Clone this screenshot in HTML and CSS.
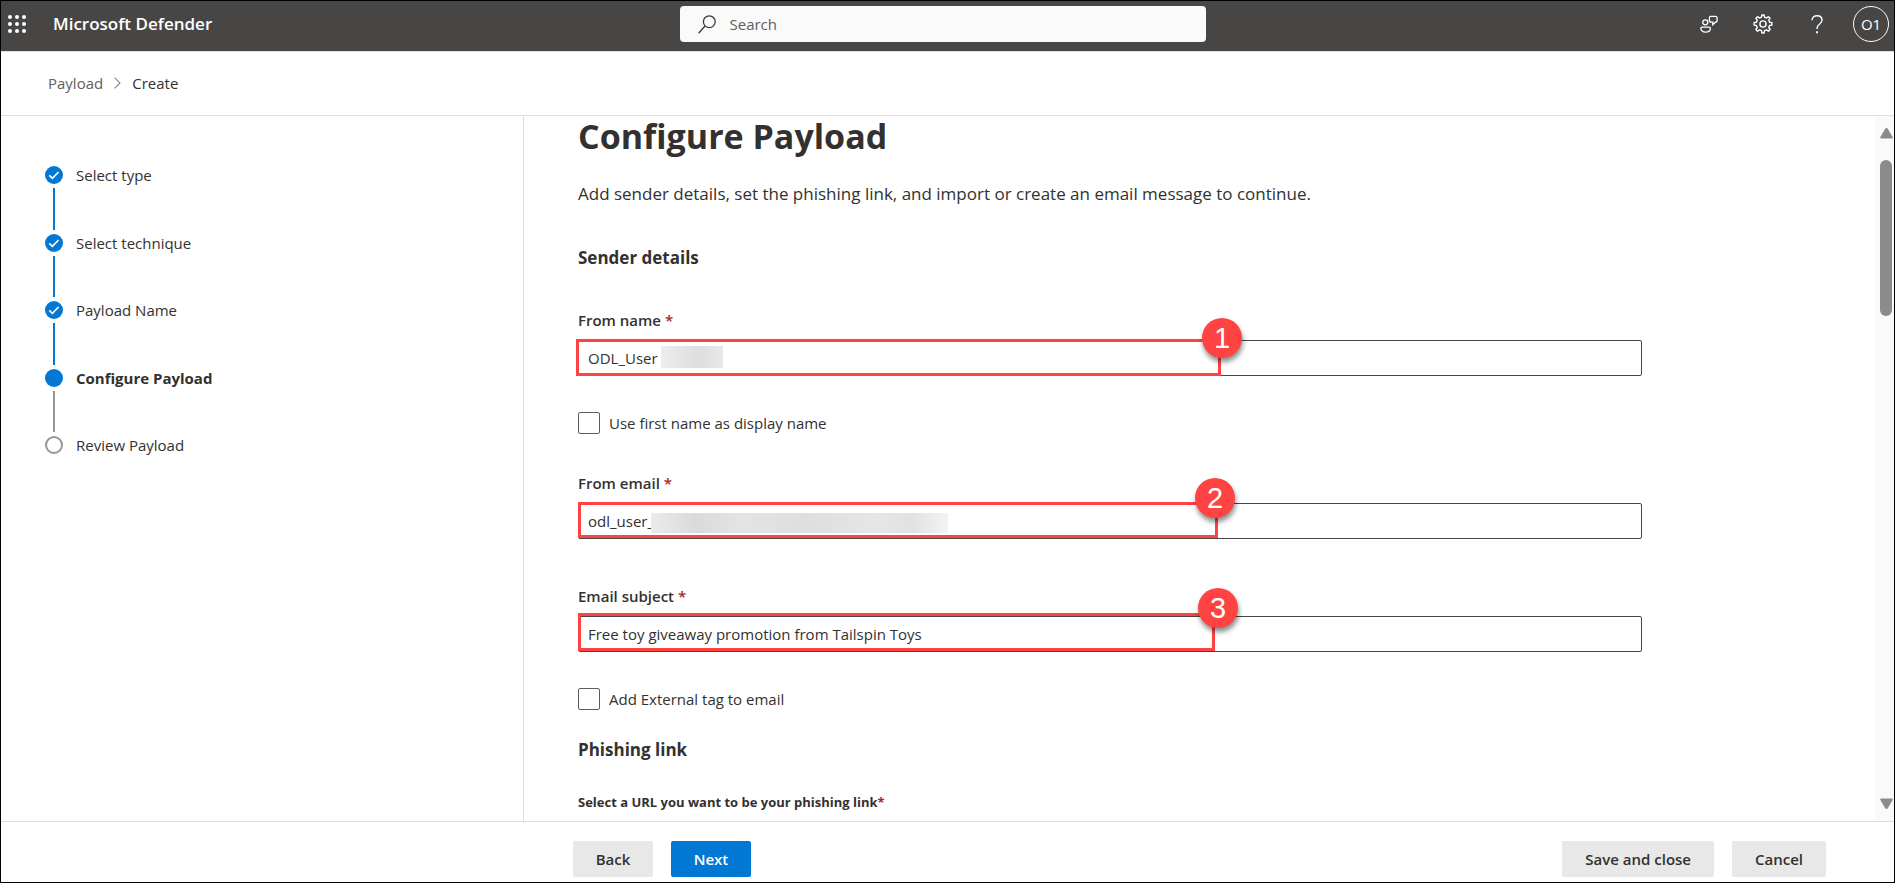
FILE: index.html
```html
<!DOCTYPE html>
<html lang="en">
<head>
<meta charset="utf-8">
<title>Microsoft Defender</title>
<link rel="stylesheet" href="styles.css">
</head>
<body>
<div class="app">
  <header class="topbar">
    <div class="brand">
      <button class="icon-button" type="button" aria-label="App launcher">
        <svg width="18" height="18" viewBox="0 0 18 18" fill="#fff"><circle cx="2" cy="2" r="2"/><circle cx="9" cy="2" r="2"/><circle cx="16" cy="2" r="2"/><circle cx="2" cy="9" r="2"/><circle cx="9" cy="9" r="2"/><circle cx="16" cy="9" r="2"/><circle cx="2" cy="16" r="2"/><circle cx="9" cy="16" r="2"/><circle cx="16" cy="16" r="2"/></svg>
      </button>
      <span class="brand-name">Microsoft Defender</span>
    </div>
    <label class="search">
      <svg width="18" height="19" viewBox="0 0 18 19" fill="none" stroke="#3b3a39" stroke-width="1.3"><circle cx="11.3" cy="6.7" r="5.9"/><path d="M7 11 .6 18.2"/></svg>
      <input class="search-input" type="text" placeholder="Search" aria-label="Search">
    </label>
    <div class="actions">
      <button class="icon-button" type="button" aria-label="Feedback">
        <svg width="18" height="18" viewBox="0 0 18 18" fill="none" stroke="#fff" stroke-width="1.3"><circle cx="5.3" cy="7.3" r="2.5"/><path d="M2.2 12.1h6.9c.8 0 1.3.5 1.3 1.2 0 2.300-2.100 3.900-4.900 3.900S.8 15.600.8 13.300c0-.7.6-1.200 1.400-1.200Z"/><path d="M10.500 1.400h4.900c1 0 1.700.7 1.700 1.600v2.600c0 .9-.7 1.600-1.700 1.600l-2.600 2.600V7.200h-1.200c-1.200 0-2.200-.9-2.200-2V2.800c0-.8.5-1.400 1.100-1.400Z"/></svg>
      </button>
      <button class="icon-button" type="button" aria-label="Settings">
        <svg width="20" height="20" viewBox="0 0 20 20" fill="none" stroke="#fff" stroke-width="1.4" stroke-linejoin="round"><circle cx="10" cy="10" r="3.100"/><path d="M8.500 3.200 8.900 1h2.200l.4 2.200 2 .8 1.900-1.300 1.600 1.600L15.800 6.200l.8 2 2.300.4v2.500l-2.300.4-.8 2 1.300 2-1.700 1.700-1.900-1.300-2 .8-.4 2.300H8.900l-.4-2.300-2-.8-1.900 1.300-1.700-1.700 1.300-2-.8-2-2.300-.4V8.600l2.300-.4.8-2L2.900 4.300l1.700-1.600L6.500 4Z"/></svg>
      </button>
      <button class="icon-button" type="button" aria-label="Help">
        <svg width="12" height="19" viewBox="0 0 12 19" fill="none" stroke="#fff" stroke-width="1.400"><path d="M1 5.300C1 2.500 3.100.8 6 .8s5 1.600 5 4.300c0 2.200-1.300 3.100-2.600 4.200C6.900 10.500 6 11.300 6 13.500v.5"/><path d="M5.100 17.300h1.900" stroke-width="2"/></svg>
      </button>
      <button class="avatar" type="button">O1</button>
    </div>
  </header>

  <nav class="breadcrumb" aria-label="Breadcrumb">
    <a class="crumb" href="#payload">Payload</a>
    <svg width="7" height="12" viewBox="0 0 7 12" fill="none" stroke="#8a8886" stroke-width="1.100"><path d="m.6.600 5.400 5.400L.6 11.400"/></svg>
    <a class="crumb crumb-current" href="#create">Create</a>
  </nav>

  <div class="body">
    <aside class="sidebar">
      <ol class="steps">
        <li class="step done"><span class="marker"><svg width="18" height="18" viewBox="0 0 18 18" fill="none" stroke="#fff" stroke-width="1.700"><path d="m4.300 9.300 3.100 3 6.200-6.300"/></svg></span>Select type</li>
        <li class="rail"></li>
        <li class="step done"><span class="marker"><svg width="18" height="18" viewBox="0 0 18 18" fill="none" stroke="#fff" stroke-width="1.700"><path d="m4.300 9.300 3.100 3 6.200-6.300"/></svg></span>Select technique</li>
        <li class="rail"></li>
        <li class="step done"><span class="marker"><svg width="18" height="18" viewBox="0 0 18 18" fill="none" stroke="#fff" stroke-width="1.700"><path d="m4.300 9.300 3.100 3 6.200-6.300"/></svg></span>Payload Name</li>
        <li class="rail"></li>
        <li class="step current" aria-current="step"><span class="marker"></span>Configure Payload</li>
        <li class="rail rail-pending"></li>
        <li class="step pending"><span class="marker"></span>Review Payload</li>
      </ol>
    </aside>

    <main class="content">
      <form class="form" id="payload-form">
        <h1 class="title">Configure Payload</h1>
        <p class="intro">Add sender details, set the phishing link, and import or create an email message to continue.</p>
        <h2 class="section">Sender details</h2>

        <div class="field">
          <label class="label" for="from-name">From name <span class="required">*</span></label>
          <div class="control">
            <input class="text-input" id="from-name" type="text" value="ODL_User">
            <span class="redacted redacted-name"></span>
            <span class="highlight highlight-name"><span class="badge">1</span></span>
          </div>
        </div>
        <label class="check"><input class="check-box" type="checkbox">Use first name as display name</label>

        <div class="field">
          <label class="label" for="from-email">From email <span class="required">*</span></label>
          <div class="control">
            <input class="text-input" id="from-email" type="text" value="odl_user_">
            <span class="redacted redacted-email"></span>
            <span class="highlight highlight-email"><span class="badge">2</span></span>
          </div>
        </div>

        <div class="field field-subject">
          <label class="label" for="subject">Email subject <span class="required">*</span></label>
          <div class="control">
            <input class="text-input" id="subject" type="text" value="Free toy giveaway promotion from Tailspin Toys">
            <span class="highlight highlight-subject"><span class="badge">3</span></span>
          </div>
        </div>
        <label class="check"><input class="check-box" type="checkbox">Add External tag to email</label>

        <h2 class="section section-link">Phishing link</h2>
        <p class="hint">Select a URL you want to be your phishing link<span class="required">*</span></p>
      </form>
    </main>

    <div class="scrollbar">
      <svg width="13" height="11" viewBox="0 0 13 11" fill="#8b8b8b"><path d="M5.200.8a1.500 1.500 0 0 1 2.600 0l4.800 8.200c.5.900.1 1.500-.8 1.500H1.200c-.9 0-1.300-.6-.8-1.500Z"/></svg>
      <div class="thumb"></div>
      <svg width="13" height="11" viewBox="0 0 13 11" fill="#8b8b8b"><path d="M5.200 10.200a1.500 1.500 0 0 0 2.600 0L12.600 2c.5-.9.1-1.500-.8-1.500H1.200C.3.500-.1 1.100.4 2Z"/></svg>
    </div>
  </div>

  <footer class="footer">
    <div class="button-group">
      <button class="button" type="button">Back</button>
      <button class="button primary" type="submit" form="payload-form">Next</button>
    </div>
    <div class="button-group">
      <button class="button wide" type="button">Save and close</button>
      <button class="button wide" type="button">Cancel</button>
    </div>
  </footer>
</div>
</body>
</html>
```
FILE: styles.css
```css
* { box-sizing: border-box; }

body {
  margin: 0;
  font-family: "Open Sans", "Noto Sans", sans-serif;
  font-size: 15px;
  line-height: 20px;
  color: #323130;
  background: #fff;
}

button, input { font: inherit; color: inherit; }
h1, h2, p, ol { margin: 0; padding: 0; }
svg { display: block; flex: none; }

.app {
  display: flex;
  flex-direction: column;
  height: 100vh;
  border: 1px solid #000;
}

.topbar {
  display: flex;
  align-items: center;
  padding: 5px 5px 9px 7px;
  background: #484644;
  color: #fff;
}
.brand { display: flex; flex: 1; align-items: center; gap: 27px; }
.brand-name { font-size: 17px; font-weight: 600; }
.icon-button { padding: 0; border: 0; background: none; }

.search {
  display: flex;
  align-items: center;
  gap: 14px;
  width: 526px;
  height: 36px;
  margin-right: 12px;
  padding: 0 18px;
  border-radius: 4px;
  background: #fafafa;
}
.search-input { flex: 1; padding: 0; border: 0; outline: 0; background: none; color: #323130; }
.search-input::placeholder { color: #605e5c; opacity: 1; }

.actions { display: flex; flex: 1; justify-content: flex-end; align-items: center; }
.actions .icon-button { display: grid; place-items: center; width: 54px; height: 36px; }
.avatar {
  width: 36px;
  height: 36px;
  margin-left: 9px;
  padding: 0;
  border: 1px solid #fff;
  border-radius: 50%;
  background: none;
}

.breadcrumb {
  display: flex;
  align-items: center;
  gap: 11px;
  height: 65px;
  padding: 0 47px 2px;
  border-top: 1px solid #e1dfdd;
  border-bottom: 1px solid #e1dfdd;
}
.crumb { color: #605e5c; text-decoration: none; }
.crumb-current { color: #323130; }

.body { display: flex; flex: 1; min-height: 0; }

.sidebar { flex: none; width: 523px; padding: 50px 44px; border-right: 1px solid #e1dfdd; }
.steps { display: flex; flex-direction: column; height: 288px; list-style: none; }
.step { display: flex; align-items: center; gap: 13px; height: 18px; line-height: 18px; }
.marker { width: 18px; height: 18px; border-radius: 50%; background: #0078d4; }
.current { font-weight: 700; }
.pending .marker { border: 2px solid #979593; background: none; }
.rail { flex: 1; width: 2px; margin: 4px 8px; background: #0078d4; }
.rail-pending { background: #979593; }

.content { flex: 1; min-width: 0; padding: 0 59px 0 54px; }
.form { max-width: 1064px; }
.title { font-size: 34px; font-weight: 700; line-height: 40px; }
.intro { padding-top: 26px; font-size: 17px; line-height: 24px; }
.section { padding-top: 40px; font-size: 17px; font-weight: 700; line-height: 24px; }

.field { padding-top: 40px; }
.label { display: block; padding-bottom: 10px; font-weight: 600; }
.required { color: #a4262c; }
.control { position: relative; }
.text-input {
  display: block;
  width: 100%;
  height: 36px;
  padding: 0 9px;
  border: 1px solid #484644;
  border-radius: 2px;
  background: #fff;
}
.check { display: flex; align-items: center; gap: 9px; padding-top: 36px; }
.check-box {
  appearance: none;
  width: 22px;
  height: 22px;
  margin: 0;
  border: 1px solid #605e5c;
  border-radius: 2px;
}
.check + .field { padding-top: 39px; }
.field-subject { padding-top: 47px; }
.section-link { padding-top: 28px; }
.hint { padding-top: 30px; font-size: 13px; font-weight: 700; }

.redacted { position: absolute; background: #e4e4e4; }
.redacted-name {
  left: 83px;
  top: 6px;
  width: 62px;
  height: 22px;
  background: linear-gradient(90deg, #ededed, #dedede 60%, #e8e8e8);
}
.redacted-email {
  left: 73px;
  top: 10px;
  width: 297px;
  height: 20px;
  background: linear-gradient(90deg, #ebebeb, #dadada 15%, #e4e4e4 30%, #dedede 52%, #e6e6e6 75%, #e2e2e2 88%, #f3f3f3);
}

.highlight { position: absolute; border: 3px solid #ff4343; }
.highlight-name { left: -2px; top: -1px; width: 645px; height: 37px; }
.highlight-email { left: 0; top: -1px; width: 640px; height: 36px; }
.highlight-subject { left: 0; top: -3px; width: 637px; height: 38px; }
.badge {
  position: absolute;
  top: -24px;
  right: -24px;
  display: grid;
  place-items: center;
  width: 40px;
  height: 40px;
  border-radius: 50%;
  background: #ff4343;
  box-shadow: 1px 4px 5px rgba(0, 0, 0, .45);
  color: #fff;
  font-family: "Liberation Sans", sans-serif;
  font-size: 29px;
}
.highlight-email .badge { top: -27px; right: -20px; }
.highlight-subject .badge { top: -28px; right: -26px; }

.scrollbar {
  display: flex;
  flex-direction: column;
  align-items: center;
  flex: none;
  width: 19px;
  padding: 12px 1px 12px 4px;
  background: #fafafa;
}
.thumb { width: 12px; height: 156px; margin: 21px 0 auto; border-radius: 6px; background: #8b8b8b; }

.footer {
  display: flex;
  justify-content: space-between;
  padding: 19px 68px 5px 572px;
  border-top: 1px solid #e1dfdd;
}
.button-group { display: flex; gap: 18px; }
.button {
  min-width: 80px;
  height: 36px;
  padding: 0 22px;
  border: 0;
  border-radius: 2px;
  background: #e8e8e8;
  font-weight: 600;
}
.wide { padding: 0 23px; }
.primary { background: #0078d4; color: #fff; }
```
